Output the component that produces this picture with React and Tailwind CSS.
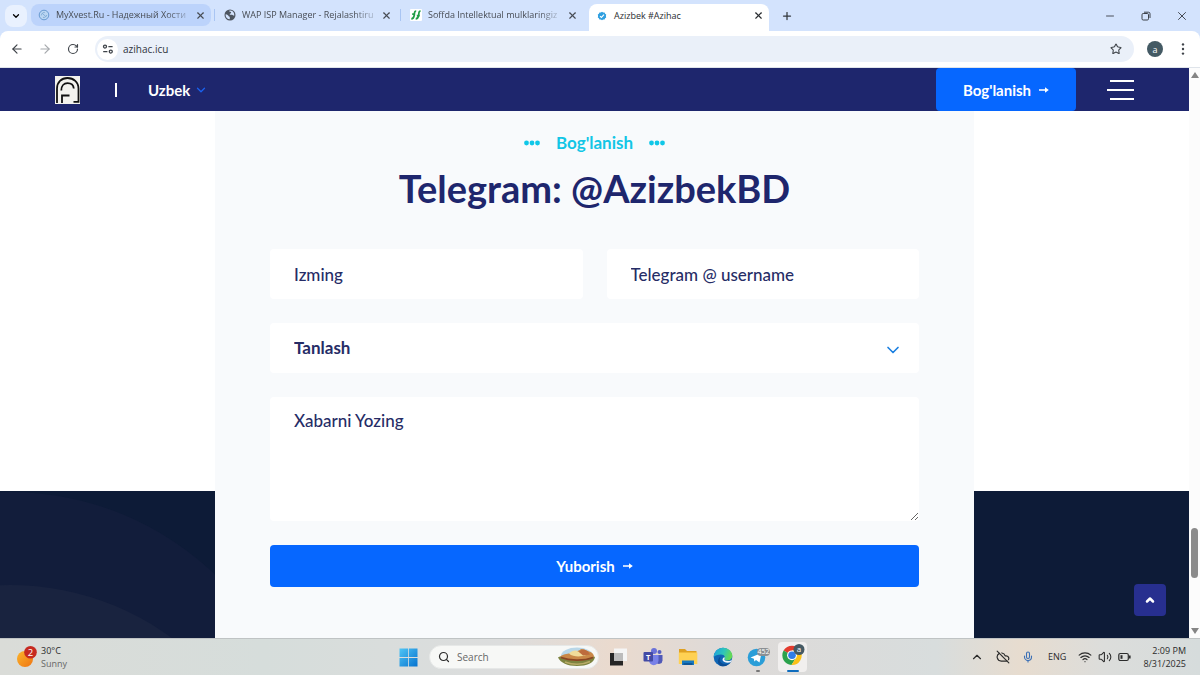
import React from "react";
import {
  ArrowLeft,
  ArrowRight,
  RotateCw,
  Star,
  ChevronDown,
  ChevronUp,
  Minus,
  X,
  Plus,
  Search,
  CloudOff,
  Mic,
  Wifi,
  Volume2,
} from "lucide-react";

function SwirlIcon() {
  return (
    <svg viewBox="0 0 12 12" className="size-3 shrink-0" aria-hidden="true">
      <circle cx="6" cy="6" r="4.8" fill="#b9d5f2" stroke="#5f93cc" strokeWidth="0.9" />
      <path d="M3.4 6.4C3.6 4.4 5 3.2 6.8 3.4M5 8.4c2 .4 3.4-.8 3.6-2.4M4.6 4.6l3 2.8" fill="none" stroke="#6f9dcc" strokeWidth="0.7" />
    </svg>
  );
}

function GlobeIcon() {
  return (
    <svg viewBox="0 0 12 12" className="size-3 shrink-0" aria-hidden="true">
      <circle cx="6" cy="6" r="5.5" fill="#4d5560" />
      <path d="M1.7 5.2c1.6.2 2.6.9 2.9 1.9.2.7 1.2.5 1.2 1.3v1.9C3.400 10.200 1.600 8.300 1.600 6zM5 1.700c.2 1.300 2.300.7 2.200 2-.1.900-1.500.7-1.500 1.600 0 .8 1.400.4 2.300.5 1 .1 1.100 1 2.200.9C10.700 4.200 9 1.800 6.500 1.500z" fill="#d3e3fd" />
    </svg>
  );
}

function SoffIcon() {
  return (
    <svg viewBox="0 0 12 12" className="size-3 shrink-0" aria-hidden="true">
      <rect width="12" height="12" rx="1" fill="#fff" />
      <path d="M6.200 2C4 2 4.600 4.200 4.300 6S3.800 9.800 1.300 9.800M10.600 2C8.400 2 9 4.200 8.700 6S8.200 9.800 5.700 9.800M2.200 5.200h3M6.800 6.600h3" fill="none" stroke="#1f9d45" strokeWidth="1.700" />
    </svg>
  );
}

function VerifiedIcon() {
  return (
    <svg viewBox="0 0 12 12" className="size-3 shrink-0" aria-hidden="true">
      <path d="M6 1.800l1.200.7 1.400-.1.500 1.300 1.100.9L9.900 6l.3 1.400-1.100.9-.5 1.300-1.400-.1-1.200.7-1.200-.7-1.400.1-.5-1.300-1.100-.9L2.100 6l-.3-1.400 1.100-.9.5-1.300 1.400.1z" fill="#2f9fe0" />
      <path d="M4 6.100l1.400 1.300L8 4.700" fill="none" stroke="#fff" strokeWidth="1.100" />
    </svg>
  );
}

function BrowserTab({ icon, title, state, fade }) {
  const look =
    state === "active"
      ? "h-[27px] self-end rounded-t-lg bg-white text-[#2a2d31] pb-1"
      : state === "hover"
        ? "h-[22px] mt-1 rounded-lg bg-[#bcd3fb] text-[#474c54]"
        : "h-[22px] mt-1 text-[#474c54]";
  const mask = fade ? "[mask-image:linear-gradient(to_right,black_85%,rgba(0,0,0,0.3))]" : "";
  return (
    <div className={`flex w-[180px] items-center pl-[7px] pr-[5px] ${look}`}>
      {icon}
      <span className={`ml-1.5 whitespace-nowrap text-[9px] ${mask}`}>{title}</span>
      <button type="button" aria-label="Close tab" className="ml-auto flex size-3 shrink-0 items-center justify-center">
        <X className="size-[11px]" strokeWidth={2.500} />
      </button>
    </div>
  );
}

function Separator({ visible }) {
  return (
    <div className="flex w-1.5 justify-center pt-[9px]">
      {visible && <div className="h-3 w-px bg-[#a9c5f3]" />}
    </div>
  );
}

function TabStrip() {
  return (
    <div className="flex h-[31px] items-start bg-[#d3e3fd]">
      <button type="button" aria-label="Search tabs" className="ml-[5px] mr-1 mt-[5px] flex size-[22px] items-center justify-center rounded-lg bg-[#e9f1fe]">
        <ChevronDown className="size-2.5" strokeWidth={3} />
      </button>
      <BrowserTab state="hover" icon={<SwirlIcon />} title="MyXvest.Ru - Надежный Хости" fade />
      <Separator visible />
      <BrowserTab icon={<GlobeIcon />} title="WAP ISP Manager - Rejalashtiru" fade />
      <Separator visible />
      <BrowserTab icon={<SoffIcon />} title="Soffda Intellektual mulklaringiz" fade />
      <Separator />
      <BrowserTab state="active" icon={<VerifiedIcon />} title="Azizbek #Azihac" />
      <button type="button" aria-label="New tab" className="ml-3 flex h-[31px] w-3 items-center justify-center text-[#33373c]">
        <Plus className="size-3 shrink-0" strokeWidth={2.500} />
      </button>
      <div className="ml-auto flex h-[31px] text-[#3b4048]">
        <button type="button" aria-label="Minimize" className="flex w-9 items-center justify-center">
          <Minus className="size-3" strokeWidth={1.800} />
        </button>
        <button type="button" aria-label="Restore" className="flex w-9 items-center justify-center">
          <svg viewBox="0 0 10 10" className="size-2.5" fill="none" stroke="currentColor" strokeWidth="1">
            <rect x="1" y="2.500" width="6.500" height="6.500" rx="1.200" />
            <path d="M3 1.200h4.500a1.500 1.500 0 0 1 1.500 1.500V7" />
          </svg>
        </button>
        <button type="button" aria-label="Close window" className="flex w-9 items-center justify-center">
          <X className="size-3.5" strokeWidth={1.600} />
        </button>
      </div>
    </div>
  );
}

function Toolbar() {
  return (
    <div className="bg-[#d3e3fd]">
      <div className="flex h-[37px] items-center rounded-t-lg border-b border-[#dfe4ea] bg-white pl-2.5 pr-2.5 text-[#3e4349]">
        <button type="button" aria-label="Back" className="flex size-3.5 items-center justify-center">
          <ArrowLeft className="size-3.5" strokeWidth={2} />
        </button>
        <button type="button" aria-label="Forward" className="ml-3.5 flex size-3.5 items-center justify-center text-[#a6a9ad]">
          <ArrowRight className="size-3.5" strokeWidth={2} />
        </button>
        <button type="button" aria-label="Reload" className="ml-3.5 flex size-3.5 items-center justify-center">
          <RotateCw className="size-3" strokeWidth={2.300} />
        </button>
        <div className="ml-[15px] flex h-[26px] flex-1 items-center rounded-full bg-[#eaf0f9] pl-0.5 pr-3">
          <button type="button" aria-label="Site information" className="flex size-[21px] items-center justify-center rounded-full bg-white">
            <svg viewBox="0 0 12 12" className="size-3" fill="none" stroke="currentColor" strokeWidth="1.300">
              <circle cx="3" cy="3.600" r="1.500" />
              <path d="M6.400 3.600h4.200M1.200 8.600h4.200" />
              <circle cx="8.800" cy="8.600" r="1.500" />
            </svg>
          </button>
          <input aria-label="Address" defaultValue="azihac.icu" className="ml-[5px] min-w-0 flex-1 bg-transparent text-[10px] text-[#303439] outline-none" />
          <button type="button" aria-label="Bookmark">
            <Star className="size-3" strokeWidth={2.200} />
          </button>
        </div>
        <button type="button" className="ml-[13px] flex size-4 items-center justify-center rounded-full bg-[#445a64] text-[9px] leading-none text-white">
          a
        </button>
        <button type="button" aria-label="Menu" className="ml-[13px] flex size-3.5 items-center justify-center">
          <svg viewBox="0 0 4 14" className="h-3.5 w-1" fill="currentColor">
            <circle cx="2" cy="2.400" r="1.200" />
            <circle cx="2" cy="7" r="1.200" />
            <circle cx="2" cy="11.600" r="1.200" />
          </svg>
        </button>
      </div>
    </div>
  );
}

function ThinArrow() {
  return (
    <svg viewBox="0 0 10 8" className="h-2 w-2.5" aria-hidden="true">
      <path d="M0 3.200h6V1.200L9.800 4 6 6.800V4.800H0z" fill="#fff" />
    </svg>
  );
}

function Logo() {
  return (
    <svg viewBox="0 0 25 28" className="h-7 w-[25px]" role="img" aria-label="Azihac">
      <rect width="25" height="28" fill="#f3f2ee" />
      <g fill="none" stroke="#111" strokeWidth="1.800">
        <path d="M2 27V12.500C2 6 6.500 2 12.500 2S23.500 6 23.500 12.500V25.800H18.500" />
        <path d="M7 27V19.500h7.500" />
        <path d="M6.300 14.500c0-4.700 2.700-7.300 6.200-7.300 3.700 0 6 2.200 6.300 5.300" />
      </g>
    </svg>
  );
}

function SiteHeader() {
  return (
    <header className="flex h-[43px] items-center bg-[#1e266d] pl-[55px] pr-[55px] text-white">
      <a href="#home">
        <Logo />
      </a>
      <span className="ml-[35px] h-3.5 w-0.5 bg-white" />
      <button type="button" className="ml-[31px] flex items-center gap-1 text-[15px] leading-5 font-bold">
        Uzbek
        <ChevronDown className="size-3.5 text-[#1a62f0]" strokeWidth={2.200} />
      </button>
      <a href="#contact" className="ml-auto flex h-full w-[140px] items-center justify-center gap-2 rounded bg-[#0667ff] text-[15px] leading-5 font-bold">
        Bog'lanish
        <ThinArrow />
      </a>
      <button type="button" aria-label="Open menu" className="ml-[31px] flex w-[27px] flex-col items-end gap-[7px]">
        <span className="h-0.5 w-6 bg-white" />
        <span className="h-0.5 w-[27px] bg-white" />
        <span className="h-0.5 w-6 bg-white" />
      </button>
    </header>
  );
}

function Dots() {
  return (
    <svg viewBox="0 0 16 6" className="h-1.5 w-4" fill="#10c7e8" aria-hidden="true">
      <circle cx="2.500" cy="3" r="2.400" />
      <circle cx="8" cy="3" r="2.400" />
      <circle cx="13.500" cy="3" r="2.400" />
    </svg>
  );
}

const field =
  "w-full rounded-sm bg-white px-6 text-[17px] leading-6 text-[#262c66] placeholder:text-[#262c66] outline-none";

function ContactCard() {
  return (
    <section id="contact" className="mx-auto w-full max-w-[759px] bg-[#f8fafc] px-[55px] pt-5 [grid-area:1/1]">
      <div className="flex items-center justify-center gap-4">
        <Dots />
        <p className="text-[17px] leading-6 font-bold text-[#12c6e6]">Bog'lanish</p>
        <Dots />
      </div>
      <h1 className="mt-2 text-center text-[38px] leading-[50px] font-bold text-[#1e266d]">Telegram: @AzizbekBD</h1>
      <form className="mt-9 flex flex-col gap-6" onSubmit={(e) => e.preventDefault()}>
        <div className="grid grid-cols-2 gap-6">
          <input aria-label="Izming" placeholder="Izming" className={`${field} h-[50px] font-medium`} />
          <input aria-label="Telegram @ username" placeholder="Telegram @ username" className={`${field} h-[50px] font-medium`} />
        </div>
        <div className="grid items-center">
          <select aria-label="Tanlash" className={`${field} h-[50px] appearance-none font-bold [grid-area:1/1]`}>
            <option>Tanlash</option>
          </select>
          <ChevronDown className="pointer-events-none mr-4 mt-1 size-5 justify-self-end text-[#1a7fe0] [grid-area:1/1]" strokeWidth={2} />
        </div>
        <textarea
          aria-label="Xabarni Yozing"
          placeholder="Xabarni Yozing"
          className={`${field} h-[124px] resize py-3 font-medium`}
        />
        <button type="submit" className="flex h-[42px] items-center justify-center gap-2 rounded bg-[#0667ff] text-[15px] leading-5 font-bold text-white">
          Yuborish
          <ThinArrow />
        </button>
      </form>
    </section>
  );
}

function Scrollbar() {
  return (
    <div className="flex w-[11px] flex-col items-center bg-[#fcfcfc] py-1" aria-hidden="true">
      <svg viewBox="0 0 8 6" className="h-1.5 w-2" fill="#858585">
        <path d="M4 0l4 6H0z" />
      </svg>
      <div className="flex-1" />
      <div className="mb-[50px] h-[50px] w-[7px] rounded-full bg-[#8b8b8b]" />
      <svg viewBox="0 0 8 6" className="h-1.5 w-2" fill="#858585">
        <path d="M0 0h8L4 6z" />
      </svg>
    </div>
  );
}

function Page() {
  return (
    <div className="flex flex-1">
      <div className="relative flex min-w-0 flex-1 flex-col font-[Lato,'Noto_Sans',sans-serif]">
        <SiteHeader />
        <main className="grid flex-1">
          <div className="flex flex-col bg-white [grid-area:1/1]">
            <div className="flex-1" />
            <div className="h-[147px] overflow-hidden bg-[#0d1b37]">
              <svg viewBox="0 0 320 147" className="h-[147px] w-80" aria-hidden="true">
                <circle cx="10" cy="297" r="296" fill="#121d3b" />
                <circle cx="10" cy="368" r="274" fill="#19233f" />
              </svg>
            </div>
          </div>
          <ContactCard />
        </main>
        <button type="button" aria-label="Back to top" className="absolute bottom-[22px] right-[23px] flex size-8 items-center justify-center rounded-sm bg-[#272f8f] text-white">
          <ChevronUp className="size-3" strokeWidth={5} />
        </button>
      </div>
      <Scrollbar />
    </div>
  );
}

function WindowsIcon() {
  return (
    <svg viewBox="0 0 19 19" className="size-[19px]">
      <defs>
        <linearGradient id="win" x1="0" y1="0" x2="1" y2="1">
          <stop offset="0" stopColor="#4fc5f5" />
          <stop offset="1" stopColor="#0672cf" />
        </linearGradient>
      </defs>
      <path d="M0.500 0.500h8.600v8.600H.5zM9.900.5h8.600v8.600H9.900zM.5 9.900h8.600v8.600H.5zM9.900 9.900h8.600v8.600H9.900z" fill="url(#win)" />
    </svg>
  );
}

function SandwichArt() {
  return (
    <svg viewBox="0 0 40 20" className="h-5 w-10" aria-hidden="true">
      <ellipse cx="20" cy="9" rx="16" ry="8.500" fill="#b9d7e8" />
      <path d="M1 10.500c2-2 6-1 9-1.500 4-2 9-3 13-1 5-1 10-.5 15 2-1 6-8 9-18 9S4 16 1 10.500z" fill="#7d8440" />
      <path d="M3 9.500C8 6.500 11 7 14 6c4-2.500 7-1 10-4 3-.500 5 1.500 8 2.500 3 .500 5 3 5 5-5 3-11 4-17 4-7 0-13-1-17-4z" fill="#c98848" />
      <path d="M12 6.500c3-3 7-4 9-2s5-1 8 0 2 3-1 4-12 2-16-2z" fill="#f0dc9a" />
      <path d="M4 10.500c8 3 22 4 32 0" fill="none" stroke="#8a4523" strokeWidth="1.600" />
      <path d="M22 5c2-3 6-3 9-.5l2 3-7 1z" fill="#bd6b3d" />
      <path d="M8 15c8 3 17 3 25-.5" fill="none" stroke="#b9ac68" strokeWidth="1.500" />
    </svg>
  );
}

function TaskViewIcon() {
  return (
    <svg viewBox="0 0 20 20" className="size-5">
      <path d="M2 6h13v12.500H2z" fill="#262626" />
      <path d="M6 1.500h13v12.500H6z" fill="#f5f5f5" />
      <path d="M6 6h9v8H6z" fill="#bcbcbc" />
    </svg>
  );
}

function TeamsIcon() {
  return (
    <svg viewBox="0 0 20 20" className="size-5">
      <circle cx="11" cy="4" r="3" fill="#6a71d8" />
      <circle cx="16.500" cy="5" r="2" fill="#565ec2" />
      <path d="M13 8h6.500v5.500a3.500 3.500 0 0 1-6.500 1.700z" fill="#5159b8" />
      <path d="M6 8h9.500v5.500a4.700 4.700 0 0 1-9.500 0z" fill="#7981e8" />
      <rect x="0.500" y="5" width="9.500" height="9.500" rx="1" fill="#434aa5" />
      <text x="5.200" y="12.500" textAnchor="middle" fontSize="7.500" fontWeight="700" fill="#fff" fontFamily="Open Sans">T</text>
    </svg>
  );
}

function FolderIcon() {
  return (
    <svg viewBox="0 0 20 20" className="size-5">
      <path d="M1 2h6l2 2h9.500v5H1z" fill="#dfa021" />
      <path d="M.8 5.500h18.500V17H.8z" fill="#ffd153" />
      <path d="M4 13.500h12V18H4z" fill="#1878c0" />
      <path d="M5.500 16h9v2h-9z" fill="#0f5798" />
    </svg>
  );
}

function EdgeIcon() {
  return (
    <svg viewBox="0 0 20 20" className="size-5">
      <defs>
        <linearGradient id="edgeTop" x1="0" y1="0" x2="1" y2="0.300">
          <stop offset="0" stopColor="#1b9de2" />
          <stop offset="0.600" stopColor="#2fc6b8" />
          <stop offset="1" stopColor="#63d957" />
        </linearGradient>
      </defs>
      <circle cx="10" cy="10" r="9.300" fill="#0f65b5" />
      <path d="M.7 10C1 4.500 5 .7 10 .7c5.500 0 9.300 4 9.300 8 0 3-2.300 4.700-5 4.700-2 0-3.200-.8-3-1.600.9-1 .8-4.300-3.300-4.300C4.500 7.500 1.800 8.500.7 10z" fill="url(#edgeTop)" />
      <path d="M8 9.500c-2 1.800-1.800 6 2.500 7.500 3 .8 5.500 0 7.500-2-2 3-6 5-10 4C3.500 17 4.500 10.500 8 9.500z" fill="#0b4c93" />
      <path d="M11.500 11.500c-.8 1 .5 2.500 3.300 2.500 1.800 0 3.400-.5 4.200-1.300l-.9 2c-2.700 1.800-7.600 1-8.500-1.500-.3-1 .4-2.700 1.600-3 .7.200.7.800.3 1.300z" fill="#eef5fb" />
    </svg>
  );
}

function TelegramIcon() {
  return (
    <svg viewBox="0 0 24 20" className="h-5 w-6">
      <circle cx="10.500" cy="10.500" r="8.800" fill="#2b9ed8" />
      <path d="M4.500 10.500L15.500 6l-2 9.500-3.500-2.600-1.700 1.700-.4-2.800z" fill="#fff" />
      <rect x="11" y="1" width="13" height="8" rx="4" fill="#8b8f93" />
      <text x="17.500" y="7.400" textAnchor="middle" fontSize="7" fill="#fff" fontFamily="Open Sans">452</text>
    </svg>
  );
}

function ChromeIcon() {
  return (
    <svg viewBox="0 0 24 22" className="h-[22px] w-6">
      <path d="M11 11.500L2.600 6.500A9.700 9.700 0 0 1 19.400 6.500H11z" fill="#e33b2e" />
      <path d="M11 11.300L2.600 6.500A9.700 9.700 0 0 0 10.500 21l4.700-7.500z" fill="#2ba24c" />
      <path d="M11 6.500h8.400A9.700 9.700 0 0 1 10.500 21l4.700-7.500z" fill="#fbc117" />
      <circle cx="11" cy="11.300" r="4.900" fill="#fff" />
      <circle cx="11" cy="11.300" r="3.800" fill="#2f7de9" />
      <circle cx="18" cy="5.500" r="5.500" fill="#455a64" />
      <text x="18" y="8" textAnchor="middle" fontSize="8" fill="#fff" fontFamily="Open Sans">a</text>
    </svg>
  );
}

function TaskButton({ label, indicator, active, children }) {
  return (
    <button
      type="button"
      aria-label={label}
      className={`flex h-[30px] w-[29px] flex-col items-center justify-between rounded ${active ? "bg-[#f1efee] pt-0.5" : "pt-[5px]"}`}
    >
      {children}
      {indicator && <span className={`h-0.5 shrink-0 rounded-full ${active ? "w-3 bg-[#0f6cbd]" : "w-1 bg-[#777]"}`} />}
    </button>
  );
}

function Taskbar() {
  return (
    <footer className="grid h-[37px] grid-cols-[1fr_auto_1fr] items-center border-t border-[#bfc3c4] bg-[linear-gradient(90deg,#dadcd8_0%,#d6dddb_22%,#dcdddd_42%,#eadace_51%,#dedad8_60%,#d8dddd_78%,#e7dccf_85%,#dcdddb_92%,#d6dcdc_100%)] pl-[17px] pr-[11px] text-[#2b2b2b]">
      <div className="flex items-center gap-1">
        <svg viewBox="0 0 20 23" className="h-[23px] w-5" aria-hidden="true">
          <defs>
            <linearGradient id="sun" x1="0" y1="0" x2="1" y2="1">
              <stop offset="0" stopColor="#fbb52c" />
              <stop offset="1" stopColor="#ef7412" />
            </linearGradient>
          </defs>
          <circle cx="8" cy="13" r="8" fill="url(#sun)" />
          <circle cx="13.500" cy="6.300" r="6.300" fill="#c62a20" />
          <text x="13.500" y="9.600" textAnchor="middle" fontSize="9.500" fill="#fff" fontFamily="Open Sans">2</text>
        </svg>
        <div className="text-[9px] leading-[13px]">
          <p>30°C</p>
          <p className="text-[#666]">Sunny</p>
        </div>
      </div>
      <div className="flex items-center">
        <button type="button" aria-label="Start">
          <WindowsIcon />
        </button>
        <label className="ml-[11px] flex h-6 w-[170px] items-center rounded-full border border-[#e6e8e7] bg-[#f7f8f6] pl-2 pr-px">
          <Search className="size-3" strokeWidth={2.400} />
          <input aria-label="Search" placeholder="Search" className="ml-[7px] min-w-0 flex-1 bg-transparent text-[10px] outline-none placeholder:text-[#666]" />
          <SandwichArt />
        </label>
        <div className="ml-1 flex gap-1.5">
          <TaskButton label="Task view"><TaskViewIcon /></TaskButton>
          <TaskButton label="Teams"><TeamsIcon /></TaskButton>
          <TaskButton label="File Explorer"><FolderIcon /></TaskButton>
          <TaskButton label="Edge"><EdgeIcon /></TaskButton>
          <TaskButton label="Telegram" indicator><TelegramIcon /></TaskButton>
          <TaskButton label="Chrome" indicator active><ChromeIcon /></TaskButton>
        </div>
      </div>
      <div className="flex items-center justify-end text-[9px]">
        <ChevronUp className="size-3.5" strokeWidth={2} />
        <CloudOff className="ml-3 size-3.5" strokeWidth={2} />
        <Mic className="ml-3 size-3 text-[#3a6fb5]" strokeWidth={2.200} />
        <span className="ml-3.5">ENG</span>
        <Wifi className="ml-3 size-3.5" strokeWidth={2} />
        <Volume2 className="ml-1.5 size-3.5" strokeWidth={1.800} />
        <svg viewBox="0 0 13 10" className="ml-1.5 h-2.5 w-[13px]" fill="none" stroke="currentColor" strokeWidth="1.200">
          <rect x="0.800" y="1.500" width="9.500" height="7" rx="1.500" />
          <path d="M11.800 3.500v3" strokeWidth="1.600" />
          <path d="M2.500 3.200h2v3.600h-2z" fill="currentColor" stroke="none" />
        </svg>
        <div className="ml-3 mr-[3px] text-right leading-[13px]">
          <p>2:09 PM</p>
          <p>8/31/2025</p>
        </div>
      </div>
    </footer>
  );
}

export default function App() {
  return (
    <div className="flex min-h-screen flex-col bg-white font-['Open_Sans','Noto_Sans',sans-serif]">
      <TabStrip />
      <Toolbar />
      <Page />
      <Taskbar />
    </div>
  );
}
